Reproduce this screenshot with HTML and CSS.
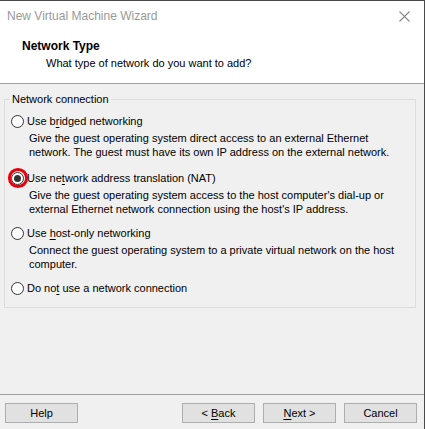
FILE: index.html
```html
<!DOCTYPE html>
<html>
<head>
<meta charset="utf-8">
<link rel="stylesheet" href="styles.css">
</head>
<body>
<div class="window">
  <div class="titlebar">
    <span class="title">New Virtual Machine Wizard</span>
    <svg class="close" width="11" height="11" viewBox="0 0 11 11"><path d="M0.5 0.5 L10.5 10.5 M10.5 0.5 L0.5 10.5" stroke="#8a8a8a" stroke-width="1.1" fill="none"/></svg>
  </div>
  <div class="header">
    <div class="h-title">Network Type</div>
    <div class="h-sub">What type of network do you want to add?</div>
  </div>
  <div class="content">
    <fieldset class="group">
      <legend>Network connection</legend>
      <div class="option first">
        <div class="radio-row">
          <span class="radio"></span>
          <span class="label">Use b<u>r</u>idged networking</span>
        </div>
        <div class="desc">Give the guest operating system direct access to an external Ethernet<br>network. The guest must have its own IP address on the external network.</div>
      </div>
      <div class="option">
        <div class="radio-row">
          <span class="radio checked">
            <svg class="ring" width="22" height="22" viewBox="0 0 22 22"><circle cx="11" cy="11" r="8.6" fill="none" stroke="#e8000b" stroke-width="3"/></svg>
          </span>
          <span class="label">Use ne<u>t</u>work address translation (NAT)</span>
        </div>
        <div class="desc">Give the guest operating system access to the host computer's dial-up or<br>external Ethernet network connection using the host's IP address.</div>
      </div>
      <div class="option">
        <div class="radio-row">
          <span class="radio"></span>
          <span class="label">Use <u>h</u>ost-only networking</span>
        </div>
        <div class="desc">Connect the guest operating system to a private virtual network on the host<br>computer.</div>
      </div>
      <div class="option">
        <div class="radio-row">
          <span class="radio"></span>
          <span class="label">Do no<u>t</u> use a network connection</span>
        </div>
      </div>
    </fieldset>
  </div>
  <div class="footer">
    <button class="btn">Help</button>
    <div class="spacer"></div>
    <button class="btn">&lt; <u>B</u>ack</button>
    <button class="btn"><u>N</u>ext &gt;</button>
    <button class="btn">Cancel</button>
  </div>
</div>
</body>
</html>
```

FILE: styles.css
```css
* { box-sizing: border-box; }
html, body { margin: 0; padding: 0; }
body {
  font-family: "Liberation Sans", Arial, sans-serif;
  font-size: 11px;
  color: #000;
  background: #f0f0f0;
}
.window {
  width: 425px;
  height: 429px;
  border-top: 1px solid #4a4a4a;
  border-right: 1px solid #4a4a4a;
  background: #f0f0f0;
  display: flex;
  flex-direction: column;
}
.titlebar {
  height: 30px;
  background: #fff;
  display: flex;
  align-items: center;
  padding: 0 14px 0 7px;
}
.title {
  flex: 1;
  color: #999;
  font-size: 12px;
}
.close { display: block; }
.header {
  background: #fff;
  height: 53px;
  padding-top: 7px;
  border-bottom: 1px solid #a0a0a0;
}
.h-title {
  font-weight: bold;
  font-size: 12px;
  padding-left: 22px;
  line-height: 16px;
}
.h-sub {
  padding-left: 46px;
  line-height: 16px;
  margin-top: 1px;
}
.content {
  flex: 1;
  padding: 8px 8px 0 4px;
}
.group {
  margin: 0;
  border: 1px solid #dcdcdc;
  padding: 7px 0 11px 6px;
}
.group legend {
  padding: 0 2px;
  margin-left: -1px;
  line-height: 14px;
}
.option { margin-bottom: 9px; }
.option.first { margin-bottom: 11px; }
.option:last-child { margin-bottom: 0; }
.radio-row {
  display: flex;
  align-items: center;
  height: 16px;
}
.radio {
  position: relative;
  width: 13px;
  height: 13px;
  border: 1px solid #333;
  border-radius: 50%;
  background: #fff;
  margin-right: 3px;
  flex: none;
}
.radio.checked::after {
  content: "";
  position: absolute;
  left: 2px;
  top: 2px;
  width: 7px;
  height: 7px;
  border-radius: 50%;
  background: #333;
}
.ring {
  position: absolute;
  left: -5.5px;
  top: -5.5px;
}
.label { line-height: 16px; white-space: nowrap; }
.desc {
  padding-left: 18px;
  margin-top: 2px;
  line-height: 14px;
  white-space: nowrap;
}
u { text-decoration: underline; text-underline-offset: 2px; }
.footer {
  height: 35px;
  border-top: 1px solid #a0a0a0;
  display: flex;
  align-items: flex-start;
  padding: 8px 7px 0 5px;
  gap: 8px;
}
.spacer { flex: 1; }
.btn {
  width: 73px;
  height: 20px;
  background: #e1e1e1;
  border: 1px solid #adadad;
  font-family: inherit;
  font-size: 11px;
  color: #000;
  padding: 0;
  margin: 0;
  line-height: 18px;
}
```
